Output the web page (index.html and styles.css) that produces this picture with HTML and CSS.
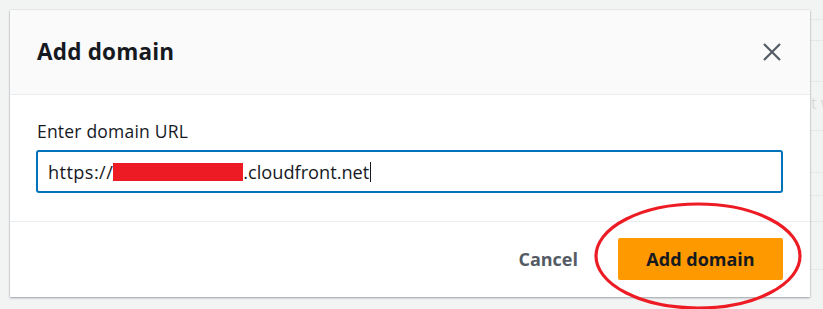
FILE: index.html
```html
<!DOCTYPE html>
<html>
<head>
  <meta charset="utf-8" />
  <title>Add domain</title>
  <link rel="stylesheet" href="styles.css">
</head>
<body>
  <div class="backdrop">
    <div class="row" style="height:20px"></div>
    <div class="row" style="height:21px"></div>
    <div class="row" style="height:41px"></div>
    <div class="row" style="height:49px"><span class="ghost">t w</span></div>
    <div class="row" style="height:42px"></div>
    <div class="row" style="height:23px"></div>
    <div class="row" style="height:26px"></div>
    <div class="row" style="height:48px"></div>
  </div>

  <div class="modal">
    <div class="modal-header">
      <span class="modal-title">Add domain</span>
      <a class="close">
        <svg width="20" height="20" viewBox="0 0 20 20">
          <path d="M2 2 L18 18 M18 2 L2 18" stroke="#545b64" stroke-width="2.2" fill="none" />
        </svg>
      </a>
    </div>
    <div class="modal-body">
      <label class="field-label">Enter domain URL</label>
      <div class="input">
        <span class="scheme">https://</span><span class="redact"></span><span>.cloudfront.net</span><span class="caret"></span>
      </div>
    </div>
    <div class="modal-footer">
      <a class="btn-link">Cancel</a>
      <a class="btn-primary">Add domain</a>
    </div>
  </div>

  <svg class="mark" width="216" height="112" viewBox="0 0 216 112">
    <ellipse cx="104" cy="56" rx="102" ry="52" fill="none" stroke="#ed1c24" stroke-width="3.2" />
  </svg>
</body>
</html>
```

FILE: styles.css
```css
html, body {
  margin: 0;
  padding: 0;
}

body {
  width: 823px;
  height: 309px;
  overflow: hidden;
  background: #f2f3f3;
  font-family: "Open Sans", "Noto Sans", sans-serif;
  color: #16191f;
  position: relative;
}

/* table rows behind the overlay */
.backdrop {
  padding-left: 600px;
}

.backdrop .row {
  box-sizing: border-box;
  border-bottom: 1px solid #e6e8e8;
  position: relative;
}

.ghost {
  position: absolute;
  left: 211px;
  top: 10px;
  font-size: 16px;
  white-space: nowrap;
  color: #d8dada;
}

.modal {
  position: absolute;
  left: 10px;
  top: 10px;
  width: 800px;
  height: 287px;
  background: white;
  box-shadow: 0 1px 2px rgba(0, 22, 40, 0.35), 0 0 1px rgba(0, 22, 40, 0.2);
  display: flex;
  flex-direction: column;
}

.modal-header {
  height: 85px;
  box-sizing: border-box;
  background: #fafafa;
  border-bottom: 1px solid #eaeded;
  display: flex;
  align-items: center;
  justify-content: space-between;
  padding: 0 28px 0 27px;
}

.modal-title {
  font-size: 22.5px;
  font-weight: bold;
  letter-spacing: 0.2px;
  margin-top: -2px;
}

.close {
  display: flex;
  margin-top: -1px;
}

.modal-body {
  height: 127px;
  box-sizing: border-box;
  border-bottom: 1px solid #eaeded;
  padding: 24px 27px 0 26px;
}

.field-label {
  display: block;
  font-size: 17.5px;
  letter-spacing: 0.2px;
  line-height: 24px;
  padding-left: 1px;
  margin-bottom: 7px;
}

.input {
  height: 43px;
  box-sizing: border-box;
  border: 2px solid #0073bb;
  border-radius: 3px;
  display: flex;
  align-items: center;
  padding-left: 10px;
  font-size: 18.2px;
}

.scheme {
  letter-spacing: 0.4px;
}

.redact {
  display: inline-block;
  width: 130px;
  height: 18px;
  background: #ed1c24;
  margin: 1px 0 0 0;
}

.caret {
  display: inline-block;
  width: 1px;
  height: 20px;
  background: #16191f;
  margin-left: 1px;
}

.modal-footer {
  flex: 1;
  display: flex;
  align-items: center;
  justify-content: flex-end;
  gap: 40px;
  padding: 0 27px 2px 0;
}

.btn-link {
  font-size: 18px;
  font-weight: bold;
  color: #545b64;
}

.btn-primary {
  width: 165px;
  height: 42px;
  box-sizing: border-box;
  background: #ff9900;
  border-radius: 2px;
  display: flex;
  align-items: center;
  justify-content: center;
  font-size: 18px;
  font-weight: bold;
  color: #16191f;
}

.mark {
  position: absolute;
  left: 594px;
  top: 200px;
}
```
